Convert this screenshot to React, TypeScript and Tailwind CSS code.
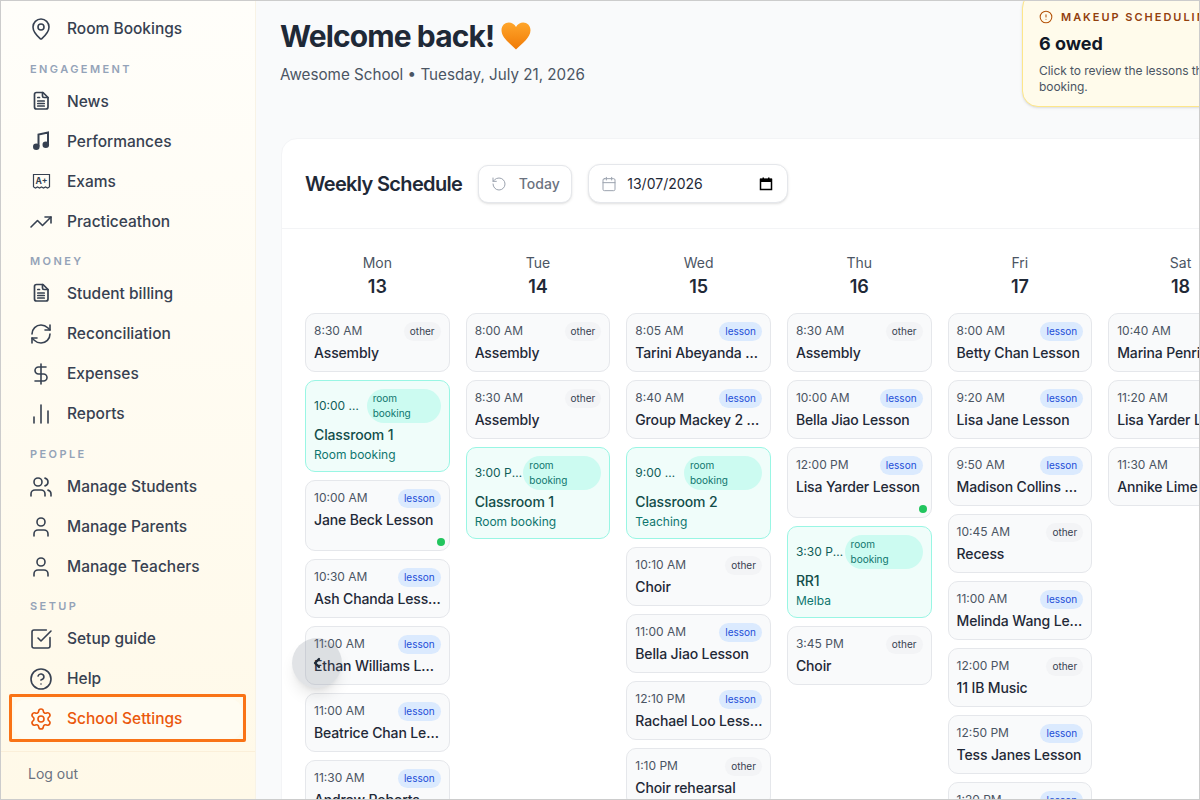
import {
  CircleAlert,
  Calendar,
  ChevronLeft,
  ChartNoAxesColumn,
  CircleHelp,
  DollarSign,
  MapPin,
  RefreshCw,
  RotateCcw,
  Settings,
  SquareCheckBig,
  TrendingUp,
  User,
  Users,
} from 'lucide-react'
import type { ReactNode } from 'react'

const iconClass = 'w-6 h-6 shrink-0'

function DocIcon() {
  return (
    <svg viewBox="0 0 24 24" className={iconClass} fill="none" stroke="currentColor" strokeWidth="1.7" strokeLinecap="round" strokeLinejoin="round">
      <path d="M7.500 2.500h6.500l5 5v9.500a2 2 0 0 1-2 2H7.500a2 2 0 0 1-2-2v-12.500a2 2 0 0 1 2-2z" />
      <path d="M13.500 2.500v3.500a1.500 1.500 0 0 0 1.500 1.500h4" />
      <path d="M8.800 7.500h1.700M8.800 11h6.400M8.800 13.500h6.400M8.800 16h6.400" />
    </svg>
  )
}

function MusicIcon() {
  return (
    <svg viewBox="0 0 24 24" className={iconClass} fill="none" stroke="currentColor" strokeWidth="2">
      <path d="M9.500 16.500V4.500L19 2.500V14.500" />
      <circle cx="7.300" cy="16.800" r="2.300" fill="currentColor" />
      <circle cx="16.800" cy="14.800" r="2.300" fill="currentColor" />
    </svg>
  )
}

function ExamIcon() {
  return (
    <svg viewBox="0 0 24 24" className={iconClass} fill="none" stroke="currentColor" strokeWidth="1.200">
      <path d="M4.500 17V4.500h16V17" />
      <path d="M4.500 17l2 1 2-1 2 1 2-1 2 1 2-1 2 1 2-1" />
      <text x="12.500" y="13.500" textAnchor="middle" fontSize="8.500" fontWeight="700" fill="currentColor" stroke="none" fontFamily="Inter, sans-serif">
        A+
      </text>
    </svg>
  )
}

function HeartEmoji() {
  return (
    <svg viewBox="0 0 30 28" className="w-[30px] h-7">
      <defs>
        <linearGradient id="heart" x1="0" y1="0" x2="0" y2="1">
          <stop offset="0" stopColor="#ffa62b" />
          <stop offset="1" stopColor="#f07a06" />
        </linearGradient>
      </defs>
      <path d="M15 27.500C9 21.500 0.500 15.500 0.500 8.200 0.500 3.600 4 0.500 7.800 0.500c3 0 5.600 1.600 7.200 4.600C16.600 2.100 19.200.500 22.200.500 26 .500 29.500 3.600 29.500 8.200 29.500 15.500 21 21.500 15 27.500z" fill="url(#heart)" />
    </svg>
  )
}

function NavRow({ icon, label, active }: { icon: ReactNode; label: string; active?: boolean }) {
  return (
    <div
      className={
        active
          ? 'h-10 mx-[13px] pl-[15px] rounded-xl bg-[#fffcf2] flex items-center gap-[14px] text-[#ea580c] font-medium text-[15.5px]'
          : 'h-10 pl-[28px] flex items-center gap-[14px] text-[#374151] font-medium text-[15.5px]'
      }
    >
      {icon}
      <span>{label}</span>
    </div>
  )
}

function SectionLabel({ children }: { children: string }) {
  return (
    <div className="mt-[11.5px] mb-[5px] pl-[29px] h-4 leading-4 text-[11px] font-semibold tracking-[0.22em] text-[#94a3b8]">
      {children}
    </div>
  )
}

function Sidebar() {
  const s = 1.6
  return (
    <aside className="w-[255px] shrink-0 h-full flex flex-col bg-gradient-to-b from-[#fffefa] to-[#fff9e8] border-r border-[#f8f3e6]">
      <div className="pt-[8px]">
        <NavRow icon={<MapPin className={iconClass} strokeWidth={s} />} label="Room Bookings" />
        <SectionLabel>ENGAGEMENT</SectionLabel>
        <NavRow icon={<DocIcon />} label="News" />
        <NavRow icon={<MusicIcon />} label="Performances" />
        <NavRow icon={<ExamIcon />} label="Exams" />
        <NavRow icon={<TrendingUp className={iconClass} strokeWidth={s} />} label="Practiceathon" />
        <SectionLabel>MONEY</SectionLabel>
        <NavRow icon={<DocIcon />} label="Student billing" />
        <NavRow icon={<RefreshCw className={iconClass} strokeWidth={s} />} label="Reconciliation" />
        <NavRow icon={<DollarSign className={iconClass} strokeWidth={s} />} label="Expenses" />
        <NavRow icon={<ChartNoAxesColumn className={iconClass} strokeWidth={s} />} label="Reports" />
        <SectionLabel>PEOPLE</SectionLabel>
        <NavRow icon={<Users className={iconClass} strokeWidth={s} />} label="Manage Students" />
        <NavRow icon={<User className={iconClass} strokeWidth={s} />} label="Manage Parents" />
        <NavRow icon={<User className={iconClass} strokeWidth={s} />} label="Manage Teachers" />
        <SectionLabel>SETUP</SectionLabel>
        <NavRow icon={<SquareCheckBig className={iconClass} strokeWidth={s} />} label="Setup guide" />
        <NavRow icon={<CircleHelp className={iconClass} strokeWidth={s} />} label="Help" />
        <NavRow icon={<Settings className={iconClass} strokeWidth={s} />} label="School Settings" active />
      </div>
      <div className="mt-[12px] border-t border-[#fbefd9] pl-[27px] pt-3 text-sm leading-5 text-[#6b7280]">Log out</div>
    </aside>
  )
}

type Item = {
  time: string
  title: string
  kind: 'other' | 'lesson' | 'room'
  sub?: string
  dot?: boolean
  pill?: string
}

const days: { name: string; num: number; items: Item[] }[] = [
  {
    name: 'Mon',
    num: 13,
    items: [
      { time: '8:30 AM', title: 'Assembly', kind: 'other' },
      { time: '10:00 AM', title: 'Classroom 1', kind: 'room', sub: 'Room booking', pill: 'w-[74px]' },
      { time: '10:00 AM', title: 'Jane Beck Lesson', kind: 'lesson', dot: true },
      { time: '10:30 AM', title: 'Ash Chanda Lesson', kind: 'lesson' },
      { time: '11:00 AM', title: 'Ethan Williams Lesson', kind: 'lesson' },
      { time: '11:00 AM', title: 'Beatrice Chan Lesson', kind: 'lesson' },
      { time: '11:30 AM', title: 'Andrew Roberts', kind: 'lesson' },
    ],
  },
  {
    name: 'Tue',
    num: 14,
    items: [
      { time: '8:00 AM', title: 'Assembly', kind: 'other' },
      { time: '8:30 AM', title: 'Assembly', kind: 'other' },
      { time: '3:00 PM', title: 'Classroom 1', kind: 'room', sub: 'Room booking', pill: 'w-[78px]' },
    ],
  },
  {
    name: 'Wed',
    num: 15,
    items: [
      { time: '8:05 AM', title: 'Tarini Abeyanda Lesson', kind: 'lesson' },
      { time: '8:40 AM', title: 'Group Mackey 2 Lesson', kind: 'lesson' },
      { time: '9:00 AM', title: 'Classroom 2', kind: 'room', sub: 'Teaching', pill: 'w-[78px]' },
      { time: '10:10 AM', title: 'Choir', kind: 'other' },
      { time: '11:00 AM', title: 'Bella Jiao Lesson', kind: 'lesson' },
      { time: '12:10 PM', title: 'Rachael Loo Lesson', kind: 'lesson' },
      { time: '1:10 PM', title: 'Choir rehearsal', kind: 'other' },
    ],
  },
  {
    name: 'Thu',
    num: 16,
    items: [
      { time: '8:30 AM', title: 'Assembly', kind: 'other' },
      { time: '10:00 AM', title: 'Bella Jiao Lesson', kind: 'lesson' },
      { time: '12:00 PM', title: 'Lisa Yarder Lesson', kind: 'lesson', dot: true },
      { time: '3:30 PM', title: 'RR1', kind: 'room', sub: 'Melba', pill: 'w-[78px]' },
      { time: '3:45 PM', title: 'Choir', kind: 'other' },
    ],
  },
  {
    name: 'Fri',
    num: 17,
    items: [
      { time: '8:00 AM', title: 'Betty Chan Lesson', kind: 'lesson' },
      { time: '9:20 AM', title: 'Lisa Jane Lesson', kind: 'lesson' },
      { time: '9:50 AM', title: 'Madison Collins Lesson', kind: 'lesson' },
      { time: '10:45 AM', title: 'Recess', kind: 'other' },
      { time: '11:00 AM', title: 'Melinda Wang Lesson', kind: 'lesson' },
      { time: '12:00 PM', title: '11 IB Music', kind: 'other' },
      { time: '12:50 PM', title: 'Tess Janes Lesson', kind: 'lesson' },
      { time: '1:20 PM', title: 'Oscar Lee Lesson', kind: 'lesson' },
    ],
  },
  {
    name: 'Sat',
    num: 18,
    items: [
      { time: '10:40 AM', title: 'Marina Penrith Lesson', kind: 'lesson' },
      { time: '11:20 AM', title: 'Lisa Yarder Lesson', kind: 'lesson' },
      { time: '11:30 AM', title: 'Annike Lime Lesson', kind: 'lesson' },
    ],
  },
]

function EventCard({ item }: { item: Item }) {
  if (item.kind === 'room') {
    return (
      <div className="rounded-[10px] border border-[#99f6e4] bg-[#f0fdfa] px-2 py-2">
        <div className="flex items-center">
          <span className="flex-1 min-w-0 pr-[1px] truncate text-xs text-[#115e59]">{item.time}</span>
          <span className={`${item.pill} shrink-0 rounded-[17px] bg-[#ccfbf1] pl-1.5 pr-4 py-0.5 text-[10px] leading-[15px] text-[#0f766e]`}>
            room booking
          </span>
        </div>
        <div className="mt-0.5 text-sm leading-5 font-medium tracking-[-0.01em] truncate text-[#134e4a]">{item.title}</div>
        <div className="mt-0.5 text-xs leading-4 text-[#0f766e]">{item.sub}</div>
      </div>
    )
  }
  const pill = item.kind === 'lesson' ? 'bg-[#dbeafe] text-[#1d4ed8]' : 'bg-[#f3f4f6] text-[#374151]'
  return (
    <div className="relative rounded-[10px] border border-[#e5e7eb] bg-[#f9fafb] px-2 py-2">
      <div className="flex items-center justify-between">
        <span className="text-xs text-[#4b5563]">{item.time}</span>
        <span className={`rounded-full px-1.5 py-0.5 text-[10px] leading-[15px] ${pill}`}>{item.kind}</span>
      </div>
      <div className="mt-0.5 -mr-px text-sm leading-5 font-medium tracking-[-0.01em] truncate text-[#1f2937]">{item.title}</div>
      {item.dot && (
        <>
          <div className="h-[12px]" />
          <span className="absolute right-1 bottom-1 w-2 h-2 rounded-full bg-[#22c55e]" />
        </>
      )}
    </div>
  )
}

function Schedule() {
  return (
    <section className="mt-[31px] ml-px w-[1000px] rounded-2xl bg-white border border-[#f3f4f6]">
      <div className="h-[90px] px-[23px] flex items-center border-b border-[#f3f4f6]">
        <h2 className="text-xl font-semibold tracking-[-0.033em] text-[#1f2937]">Weekly Schedule</h2>
        <button className="ml-4 w-[94px] h-[38px] flex items-center justify-center gap-3 rounded-[10px] border border-[#e5e7eb] bg-white shadow-sm text-sm font-medium text-[#6b7280]">
          <RotateCcw className="w-4 h-4 text-[#9ca3af]" strokeWidth={1.5} />
          Today
        </button>
        <div className="ml-4 w-[200px] h-[39px] flex items-center pl-3 pr-[14px] rounded-[12px] border border-[#e5e7eb] bg-white shadow-sm text-sm text-[#1f2937]">
          <Calendar className="w-4 h-4 text-[#9ca3af]" strokeWidth={1.5} />
          <span className="ml-[10px] flex-1">13/07/2026</span>
          <svg viewBox="0 0 14 14" className="w-[14px] h-[14px]">
            <path d="M1.500 2.500h11v10h-11z" fill="none" stroke="#000" strokeWidth="1.500" />
            <path d="M1 1.500h12v3.500H1zM3.500.500h1.500v2H3.500zM9 .500h1.500v2H9z" fill="#000" />
          </svg>
        </div>
      </div>
      <div className="pt-[24px] pl-[23px] grid grid-cols-[repeat(6,144.65px)] gap-x-4 items-start">
        {days.map(d => (
          <div key={d.name}>
            <div className="text-center mb-[11.5px]">
              <div className="text-sm leading-5 text-[#4b5563]">{d.name}</div>
              <div className="text-lg leading-7 font-semibold text-[#1f2937]">{d.num}</div>
            </div>
            <div className="flex flex-col gap-2">
              {d.items.map((item, i) => (
                <EventCard key={i} item={item} />
              ))}
            </div>
          </div>
        ))}
      </div>
    </section>
  )
}

function MakeupCard() {
  return (
    <div className="-mt-[9px] w-[300px] shrink-0 rounded-2xl border border-[#fde68a] bg-[#fffbeb] shadow-sm px-4 pt-4 pb-[11px]">
      <div className="flex items-center gap-2 text-[11px] leading-4 font-semibold tracking-[0.18em] text-[#92400e] whitespace-nowrap">
        <CircleAlert className="w-[14px] h-[14px] text-[#b45309]" strokeWidth={1.8} />
        MAKEUP SCHEDULING
      </div>
      <div className="mt-[5px] text-lg leading-7 font-bold text-[#111827]">6 owed</div>
      <p className="mt-[5px] text-xs leading-4 tracking-[-0.005em] text-[#4b5563]">Click to review the lessons that need a booking.</p>
    </div>
  )
}

export default function App() {
  return (
    <div
      className="relative w-[1200px] h-[800px] overflow-hidden border border-[#cccccc] flex bg-[#f9fafb]"
      style={{ fontFamily: 'Inter, "Noto Sans", sans-serif' }}
    >
      <Sidebar />
      <main className="flex-1 min-w-0 pl-[24px]">
        <div className="flex items-start">
          <div className="pt-[17px]">
            <h1 className="flex items-center gap-[7px] text-3xl leading-9 font-bold tracking-[-0.03em] text-[#1f2937]">
              Welcome back! <HeartEmoji />
            </h1>
            <p className="mt-[9px] text-[15.2px] leading-6 text-[#4b5563]">Awesome School • Tuesday, July 21, 2026</p>
          </div>
          <div className="ml-auto w-[177px] shrink-0">
            <MakeupCard />
          </div>
        </div>
        <Schedule />
      </main>

      <div className="absolute left-[8px] top-[693px] w-[237px] h-[48px] border-[3px] border-[#f97316] rounded-[2px]" />
      <div className="absolute left-[291px] top-[637px] w-[50px] h-[50px] rounded-full bg-[#6b7280]/20 shadow-lg flex items-center justify-center">
        <ChevronLeft className="w-4 h-4 text-[#1f2937]" strokeWidth={3.5} />
      </div>
    </div>
  )
}
